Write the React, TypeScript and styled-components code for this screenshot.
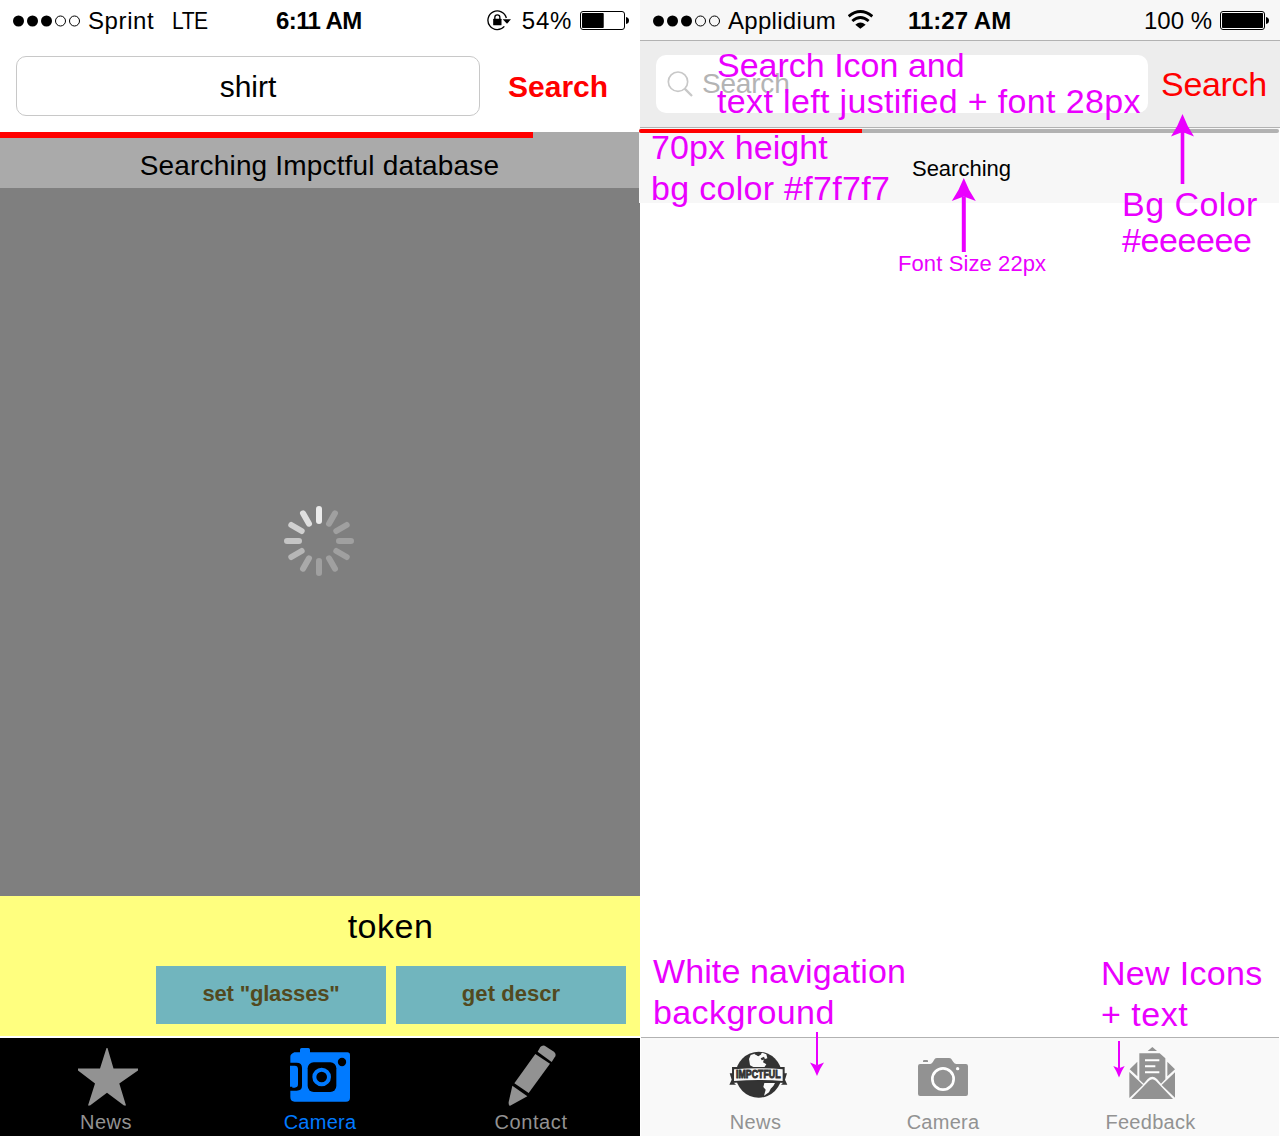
import React from "react";
import styled, { createGlobalStyle } from "styled-components";

const GlobalStyle = createGlobalStyle`
  * { box-sizing: border-box; }
  body { margin: 0; background: #fff; }
  svg { display: block; flex: none; }
`;

const sans = `"Liberation Sans", Arial, Helvetica, sans-serif`;

const Board = styled.main`
  position: relative;
  display: flex;
  width: 1280px;
  height: 1136px;
  overflow: hidden;
  font-family: ${sans};
  color: #000;
  background: #fff;
`;

const Phone = styled.section`
  display: flex;
  flex-direction: column;
  width: 640px;
  height: 1136px;
`;

const Text = styled.span<{ $size: number; $ls?: number; $bold?: boolean; $color?: string }>`
  font-size: ${(p) => p.$size}px;
  letter-spacing: ${(p) => p.$ls ?? 0}px;
  font-weight: ${(p) => (p.$bold ? 700 : 400)};
  color: ${(p) => p.$color ?? "inherit"};
  white-space: pre;
`;

/* ---------- status bar ---------- */

const StatusBar = styled.header<{ $tinted?: boolean }>`
  display: grid;
  grid-template-columns: ${(p) => (p.$tinted ? "255px 120px 1fr" : "263px 112px 1fr")};
  height: ${(p) => (p.$tinted ? 41 : 40)}px;
  line-height: 41px;
  padding: 0 11px 0 13px;
  background: ${(p) => (p.$tinted ? "#f7f7f7" : "#fff")};
  border-bottom: ${(p) => (p.$tinted ? "1px solid #b2b2b2" : "0")};
`;

const StatusGroup = styled.div<{ $align?: string }>`
  display: flex;
  align-items: center;
  justify-content: ${(p) => p.$align ?? "flex-start"};
  height: 41px;
`;

const Carrier = styled(Text)`
  margin-left: 7px;
`;

const Network = styled(Text)`
  display: inline-block;
  margin-left: 18px;
  width: 36px;
  transform: scaleX(0.88);
  transform-origin: left center;
`;

const Charge = styled(Text)`
  margin: 0 8px 0 11px;
`;

const WifiSlot = styled.div`
  margin: -2px 0 0 12px;
`;

const SignalDots = () => (
  <svg width="68" height="12" viewBox="0 0 68 12">
    {[0, 1, 2].map((i) => (
      <circle key={i} cx={5.5 + i * 14} cy="6" r="5.5" />
    ))}
    {[3, 4].map((i) => (
      <circle key={i} cx={5.5 + i * 14} cy="6" r="5" fill="none" stroke="#000" strokeWidth="1" />
    ))}
  </svg>
);

const Battery = ({ level }: { level: number }) => (
  <svg width="49" height="19" viewBox="0 0 49 19">
    <rect x="0.5" y="0.5" width="44" height="18" rx="2.5" fill="#fff" stroke="#000" />
    <rect x="2" y="2" width={41 * level} height="15" rx="0.8" />
    <path d="M46 6 Q49 6.5 49 9.5 Q49 12.500 46 13Z" />
  </svg>
);

const RotationLock = () => (
  <svg width="23.700" height="20.700" viewBox="500 29 71 62">
    <path d="M558 53 A28 28 0 1 0 552 78" fill="none" stroke="#000" strokeWidth="4" />
    <path d="M547 57 H572 L560 70Z" />
    <rect x="518.500" y="55" width="25" height="20" rx="1.500" />
    <path d="M523.500 57 V51 A7.500 7.500 0 0 1 538.500 51 V57" fill="none" stroke="#000" strokeWidth="4" />
  </svg>
);

const Wifi = () => (
  <svg width="25" height="18.700" viewBox="624 32 75 56">
    <path d="M626 51 Q661 22 697 51" fill="none" stroke="#000" strokeWidth="8.500" />
    <path d="M637 65 Q661 44 686 65" fill="none" stroke="#000" strokeWidth="8.500" />
    <path d="M646 76 Q661 63 677 76 L661 88Z" />
  </svg>
);

/* ---------- search headers ---------- */

const SearchRow = styled.div`
  display: flex;
  align-items: flex-start;
  height: 92px;
  padding: 16px 0 0 16px;
`;

const QueryField = styled.div`
  width: 464px;
  height: 60px;
  border: 1px solid #c8c8c8;
  border-radius: 10px;
  text-align: center;
  line-height: 60px;
`;

const SearchAction = styled(Text)`
  margin-left: 28px;
  line-height: 61px;
`;

const TintedSearchRow = styled.div`
  display: flex;
  align-items: flex-start;
  height: 87px;
  padding: 14px 0 0 16px;
  background: #ededed;
  border-bottom: 1px solid #b2b2b2;
`;

const PlaceholderField = styled.div`
  display: flex;
  align-items: center;
  gap: 9px;
  width: 492px;
  height: 58px;
  padding-left: 11px;
  line-height: 60px;
  border-radius: 10px;
  background: #fff;
`;

const TintedSearchAction = styled(Text)`
  margin-left: 13px;
  line-height: 59px;
`;

const Magnifier = () => (
  <svg width="26" height="26.700" viewBox="82 206 78 80" fill="none" stroke="#c8c8c8">
    <circle cx="115" cy="238" r="29" strokeWidth="5" />
    <path d="M135 259 L157 281" strokeWidth="7" />
  </svg>
);

/* ---------- progress strips ---------- */

const DarkStrip = styled.div`
  width: 639px;
  height: 56px;
  background: #aaa;
  text-align: center;
`;

const DarkProgress = styled.div`
  width: 533px;
  height: 6px;
  background: #f00;
`;

const StripLabel = styled.div`
  line-height: 55px;
`;

const LightStrip = styled.div`
  width: 640px;
  height: 75px;
  margin-left: -1px;
  padding-top: 1px;
  background: #f7f7f7;
`;

const ProgressTrack = styled.div`
  height: 4px;
  border-radius: 2px;
  background: #b2b2b2;
  overflow: hidden;
`;

const ProgressFill = styled.div`
  width: 223px;
  height: 4px;
  background: #f00;
`;

const LightLabel = styled.div`
  padding-left: 5px;
  text-align: center;
  line-height: 71px;
`;

/* ---------- body ---------- */

const LoadingArea = styled.div`
  display: flex;
  justify-content: center;
  height: 708px;
  padding: 318px 2px 0 0;
  background: #7f7f7f;
`;

const spokes = ["#ebebeb", "#a0a0a0", "#a0a0a0", "#a0a0a0", "#a0a0a0", "#a0a0a0", "#a0a0a0", "#a9a9a9", "#b6b6b6", "#c5c5c5", "#d0d0d0", "#dfdfdf"];

const Spinner = () => (
  <svg width="70" height="70" viewBox="-35 -35 70 70">
    {spokes.map((c, i) => (
      <rect key={i} x="-3" y="-35" width="6" height="18" rx="3" fill={c} transform={`rotate(${i * 30})`} />
    ))}
  </svg>
);

const TokenPanel = styled.div`
  height: 140px;
  background: #ffff7f;
`;

const TokenTitle = styled.div`
  height: 70px;
  padding-left: 141px;
  text-align: center;
  line-height: 61px;
`;

const TokenButtons = styled.div`
  display: flex;
  gap: 10px;
  padding-left: 156px;
`;

const TokenButton = styled.button<{ $ls: number }>`
  width: 230px;
  height: 58px;
  padding: 0 0 3px 0;
  border: 0;
  background: #71b5be;
  color: #524920;
  font: 700 22px ${sans};
  letter-spacing: ${(p) => p.$ls}px;
`;

const Blank = styled.div`
  flex: 1;
`;

/* ---------- tab bars ---------- */

const DarkTabs = styled.nav`
  display: grid;
  grid-template-columns: 212px 216px 206px;
  height: 98px;
  margin-top: 2px;
  background: #000;
`;

const LightTabs = styled.nav`
  display: grid;
  grid-template-columns: 209px 166px 249px;
  width: 638px;
  height: 99px;
  margin-left: 1px;
  padding-left: 10px;
  border-top: 1px solid #b2b2b2;
  background: #f9f9f9;
`;

const Tab = styled.a<{ $color: string }>`
  display: flex;
  flex-direction: column;
  align-items: center;
  line-height: 24px;
  color: ${(p) => p.$color};
`;

const TabIcon = styled.div<{ $top: number; $shift?: number }>`
  height: 72px;
  padding-top: ${(p) => p.$top}px;
  padding-left: ${(p) => (p.$shift ?? 0) * 2}px;
`;

const Star = () => (
  <svg width="60" height="58" viewBox="0 0 60 58" fill="#929292">
    <path d="M28.500 0 H29.500 L35.500 20.500 H60 V22.500 L41.300 35.500 L48 57.500 H46 L29 44.700 L12 57.500 H10 L17 35.500 L0 22.500 V20.500 H22Z" />
  </svg>
);

const RetroCamera = () => (
  <svg width="60" height="54" viewBox="690 54 180 162">
    <path d="M703 67 H720 V59 Q720 54 725 54 H745 Q750 54 750 59 V67 H862 Q870 67 870 75 V203 Q870 215 858 215 H704 Q691 215 691 201 V80 Q691 72 703 67Z" fill="#007aff" />
    <path d="M690 98 H710 Q726 98 726 114 V168 Q726 182 710 182 H690Z" />
    <path d="M690 107 H704 Q714 107 714 117 V163 Q714 173 704 173 H697 V170 H690Z" fill="#007aff" />
    <rect x="743" y="97" width="86" height="89" rx="18" />
    <circle cx="785" cy="141" r="22" fill="none" stroke="#007aff" strokeWidth="12" />
    <circle cx="846" cy="96" r="12.500" />
  </svg>
);

const Pencil = () => (
  <svg width="48" height="61.300" viewBox="144 46 144 184" fill="#929292">
    <path d="M233 66 L241 52 Q246 46 254 48 L282 66 Q289 72 286 80 L275 97Z" />
    <path d="M226 73 L270 102 L206 190 L163 161Z" />
    <path d="M157 168 L202 200 L149 229 Q145 226 146 217Z" />
  </svg>
);

const GlobeLogo = () => (
  <svg width="58.700" height="47.300" viewBox="86 94 176 142" overflow="visible">
    <circle cx="175" cy="165" r="69" fill="#333" />
    <path d="M146 118 L151 106 L163 102 L174 108 L186 99 L198 104 L201 116 L191 119 L188 128 L198 134 L190 146 H166 L149 137Z" fill="#f9f9f9" />
    <path d="M162 103 L173 98 L183 104 L174 110Z M181 116 L191 111 L194 119 L184 122Z" fill="#333" />
    <path d="M192 190 H224 L219 199 L211 207 L206 218 L191 228 L196 210 L189 202Z" fill="#f9f9f9" />
    <path d="M88 161 H99 V188 L107 195 L87 195 L94 180Z M260 161 H250 V188 L242 195 L261 195 L254 180Z" fill="#333" />
    <path d="M95 142 H253 V190 Q175 182 95 190Z" fill="#333" />
    <path d="M101 149 Q175 143 247 149 V184 Q175 178 101 184Z" fill="#f9f9f9" />
    <text x="174" y="176.500" textAnchor="middle" textLength="134" lengthAdjust="spacingAndGlyphs" fontFamily="Liberation Sans, Arial, sans-serif" fontWeight="700" fontSize="31" fill="#333" stroke="#333" strokeWidth="2.500">IMPCTFUL</text>
  </svg>
);

const Camera = () => (
  <svg width="50" height="38.300" viewBox="114 84 150 115">
    <path d="M120 102 H151 Q156 101 159 95 L164 87 Q166 84 171 84 H207 Q212 84 214 87 L220 96 Q224 102 229 102 H258 Q264 102 264 108 V192 Q264 198 258 198 H120 Q114 198 114 192 V108 Q114 102 120 102Z M129 96 V93 Q129 90 132 90 H141 Q144 90 144 93 V96Z" fill="#929292" />
    <circle cx="189" cy="147" r="32" fill="none" stroke="#fff" strokeWidth="8" />
    <circle cx="233" cy="116" r="5" fill="#fff" />
  </svg>
);

const MailDocument = () => (
  <svg width="46.700" height="52.700" viewBox="146 320 140 158">
    <path d="M202 332 L216 320 L230 332Z M171 364 V408 L148 387Z M261 364 L284 387 L261 408Z M147 395 L188 434 L147 473Z M285 395 V473 L244 434Z M152 477 L206 421 Q216 412 226 421 L279 477Z" fill="#929292" />
    <path d="M177 339 H238 L255 354 V417 L242 430 L230 416 Q216 402 202 416 L190 430 L177 418Z" fill="#929292" />
    <path d="M194 360 H237 M194 378 H225 M194 396 H237" stroke="#fff" strokeWidth="6" />
  </svg>
);

/* ---------- annotations laid over the mockups ---------- */

const pink = "#ea00ff";

const Note = styled.p<{ $x: number; $y: number; $size?: number; $line?: number; $ls?: number }>`
  position: absolute;
  left: ${(p) => p.$x}px;
  top: ${(p) => p.$y}px;
  margin: 0;
  color: ${pink};
  font-size: ${(p) => p.$size ?? 34}px;
  line-height: ${(p) => p.$line ?? 41}px;
  letter-spacing: ${(p) => p.$ls ?? 0}px;
  white-space: pre;
`;

const NoteLine = styled.span<{ $ls?: number }>`
  display: block;
  letter-spacing: ${(p) => p.$ls ?? 0}px;
`;

const ArrowLayer = styled.svg`
  position: absolute;
  inset: 0;
  pointer-events: none;
`;

const Arrow = ({ x, tip, tail, half, head, width }: { x: number; tip: number; tail: number; half: number; head: number; width: number }) => {
  const dir = tail > tip ? 1 : -1;
  const base = tip + dir * head;
  const notch = base - dir * head * 0.2;
  const mid = tip + dir * head * 0.55;
  return (
    <g fill={pink}>
      <path
        d={`M${x} ${tip} Q${x + half * 0.4} ${mid} ${x + half} ${base} L${x} ${notch} L${x - half} ${base} Q${x - half * 0.4} ${mid} ${x} ${tip}Z`}
      />
      <path d={`M${x} ${notch} V${tail}`} stroke={pink} strokeWidth={width} />
    </g>
  );
};

const gray = "#929292";

export default function App() {
  return (
    <Board>
      <GlobalStyle />

      <Phone>
        <StatusBar>
          <StatusGroup>
            <SignalDots />
            <Carrier $size={24} $ls={0.6}>Sprint</Carrier>
            <Network $size={24} $ls={-0.6}>LTE</Network>
          </StatusGroup>
          <StatusGroup>
            <Text $size={24} $bold $ls={-0.6}>6:11 AM</Text>
          </StatusGroup>
          <StatusGroup $align="flex-end">
            <RotationLock />
            <Charge $size={24} $ls={0.7}>54%</Charge>
            <Battery level={0.53} />
          </StatusGroup>
        </StatusBar>
        <SearchRow>
          <QueryField>
            <Text $size={30}>shirt</Text>
          </QueryField>
          <SearchAction $size={30} $bold $color="#f00">Search</SearchAction>
        </SearchRow>
        <DarkStrip>
          <DarkProgress />
          <StripLabel>
            <Text $size={28} $ls={0.17}>Searching Impctful database</Text>
          </StripLabel>
        </DarkStrip>
        <LoadingArea>
          <Spinner />
        </LoadingArea>
        <TokenPanel>
          <TokenTitle>
            <Text $size={34} $ls={0.5}>token</Text>
          </TokenTitle>
          <TokenButtons>
            <TokenButton $ls={-0.2}>set "glasses"</TokenButton>
            <TokenButton $ls={0.05}>get descr</TokenButton>
          </TokenButtons>
        </TokenPanel>
        <DarkTabs>
          <Tab $color={gray}>
            <TabIcon $top={10} $shift={2}><Star /></TabIcon>
            <Text $size={20} $ls={0.5}>News</Text>
          </Tab>
          <Tab $color="#007aff">
            <TabIcon $top={10}><RetroCamera /></TabIcon>
            <Text $size={20} $ls={0.25}>Camera</Text>
          </Tab>
          <Tab $color={gray}>
            <TabIcon $top={7.4} $shift={1}><Pencil /></TabIcon>
            <Text $size={20} $ls={0.6}>Contact</Text>
          </Tab>
        </DarkTabs>
      </Phone>

      <Phone>
        <StatusBar $tinted>
          <StatusGroup>
            <SignalDots />
            <Carrier $size={24} $ls={0.3}>Applidium</Carrier>
            <WifiSlot><Wifi /></WifiSlot>
          </StatusGroup>
          <StatusGroup>
            <Text $size={24} $bold>11:27 AM</Text>
          </StatusGroup>
          <StatusGroup $align="flex-end">
            <Charge $size={24}>100 %</Charge>
            <Battery level={1} />
          </StatusGroup>
        </StatusBar>
        <TintedSearchRow>
          <PlaceholderField>
            <Magnifier />
            <Text $size={28} $ls={-0.2} $color="#b4b4b4">Search</Text>
          </PlaceholderField>
          <TintedSearchAction $size={34} $ls={-0.3} $color="#f00">Search</TintedSearchAction>
        </TintedSearchRow>
        <LightStrip>
          <ProgressTrack>
            <ProgressFill />
          </ProgressTrack>
          <LightLabel>
            <Text $size={22}>Searching</Text>
          </LightLabel>
        </LightStrip>
        <Blank />
        <LightTabs>
          <Tab $color={gray}>
            <TabIcon $top={13.4} $shift={2.500}><GlobeLogo /></TabIcon>
            <Text $size={20} $ls={0.4}>News</Text>
          </Tab>
          <Tab $color={gray}>
            <TabIcon $top={20}><Camera /></TabIcon>
            <Text $size={20} $ls={0.25}>Camera</Text>
          </Tab>
          <Tab $color={gray}>
            <TabIcon $top={8.700} $shift={1.500}><MailDocument /></TabIcon>
            <Text $size={20} $ls={0.3}>Feedback</Text>
          </Tab>
        </LightTabs>
      </Phone>

      <Note $x={717} $y={47} $line={36}>
        <NoteLine>Search Icon and</NoteLine>
        <NoteLine $ls={0.35}>text left justified + font 28px</NoteLine>
      </Note>
      <Note $x={651} $y={127}>
        <NoteLine $ls={0.1}>70px height</NoteLine>
        <NoteLine $ls={0.3}>bg color #f7f7f7</NoteLine>
      </Note>
      <Note $x={1122} $y={186} $line={36}>
        <NoteLine $ls={0.45}>Bg Color</NoteLine>
        <NoteLine $ls={-0.4}>#eeeeee</NoteLine>
      </Note>
      <Note $x={898} $y={250} $size={22} $line={27} $ls={0.1}>Font Size 22px</Note>
      <Note $x={653} $y={951}>
        <NoteLine $ls={0.1}>White navigation</NoteLine>
        <NoteLine $ls={0.4}>background</NoteLine>
      </Note>
      <Note $x={1101} $y={953}>
        <NoteLine $ls={0.3}>New Icons</NoteLine>
        <NoteLine $ls={0.5}>+ text</NoteLine>
      </Note>
      <ArrowLayer width="1280" height="1136" viewBox="0 0 1280 1136">
        <Arrow x={1182.500} tip={114} tail={184} half={11.500} head={22.500} width={3.600} />
        <Arrow x={963.800} tip={178} tail={252} half={12} head={23} width={4} />
        <Arrow x={817} tip={1076} tail={1032} half={7} head={13.500} width={2} />
        <Arrow x={1119} tip={1077.500} tail={1041} half={5.700} head={11.500} width={2} />
      </ArrowLayer>
    </Board>
  );
}
